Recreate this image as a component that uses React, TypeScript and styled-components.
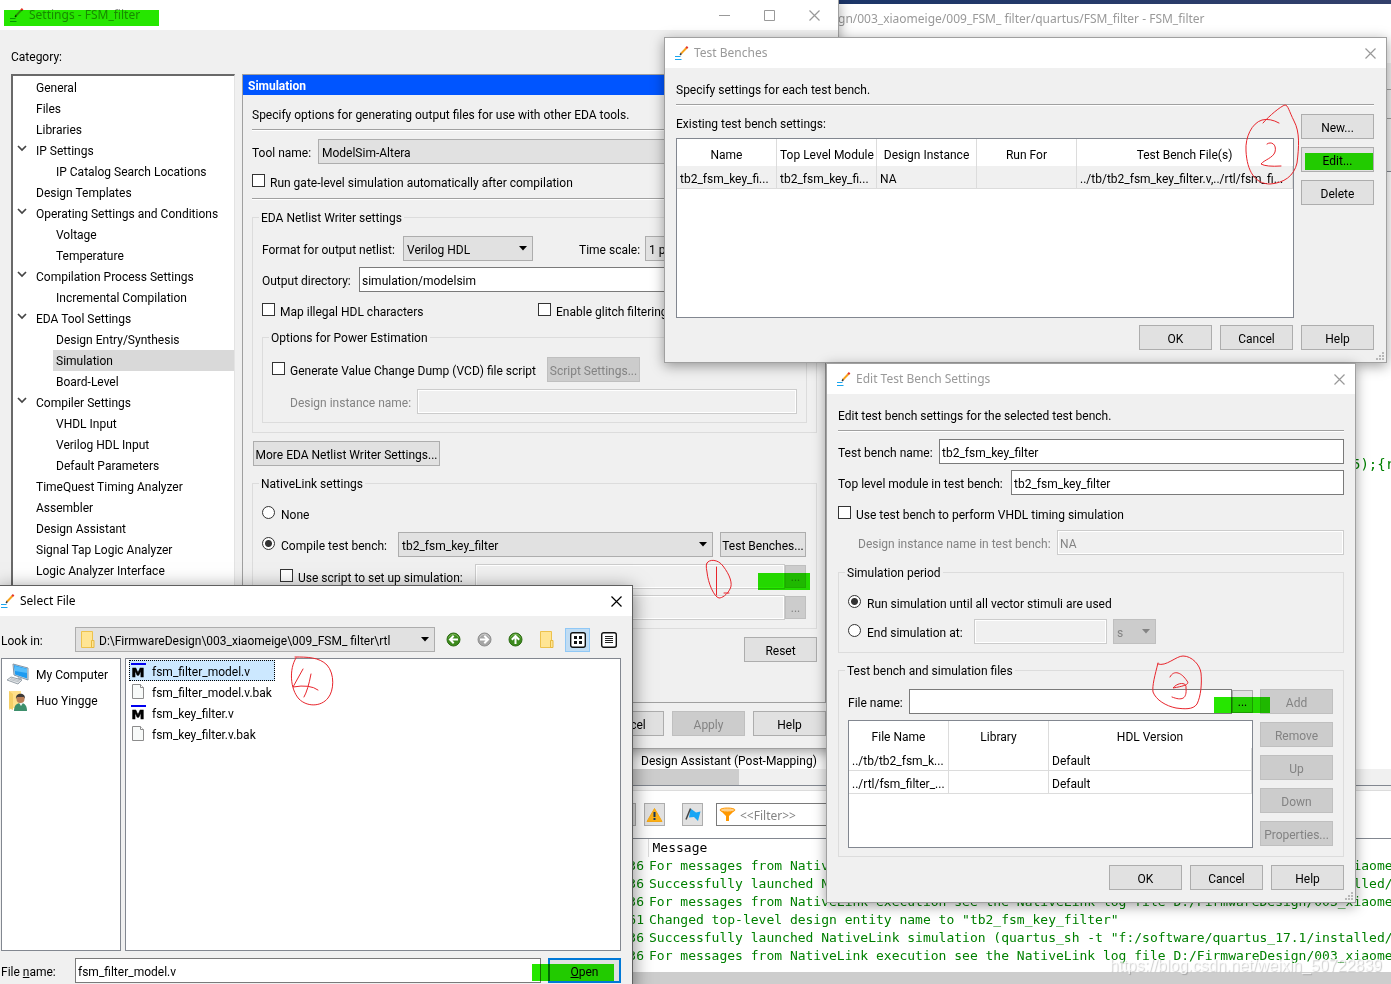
import React from "react";
import styled, { createGlobalStyle, css } from "styled-components";

const UI = `Roboto, "Noto Sans CJK SC", sans-serif`;
const CAPTION = `"Noto Sans", "Open Sans", sans-serif`;
const MONO = `"DejaVu Sans Mono", "Liberation Mono", monospace`;

const GlobalStyle = createGlobalStyle`
  * { box-sizing: border-box; }
  body { margin: 0; font: 12px/18px ${UI}; color: #000; background: #fff; }
  button, input, select { font: inherit; color: inherit; margin: 0; border-radius: 0; }
  fieldset, h1, h2, p, ul { margin: 0; padding: 0; }
  ul { list-style: none; }
`;

/* ---------- desktop and windows ---------- */

const Desktop = styled.main`
  position: relative;
  height: 100vh;
  overflow: hidden;
  background: linear-gradient(90deg, #24407a, #1b3568 60%, #33406b);
`;

const Frame = styled.section<{ $x: number; $y: number; $w: number; $active?: boolean }>`
  position: absolute;
  left: ${(p) => p.$x}px;
  top: ${(p) => p.$y}px;
  width: ${(p) => p.$w}px;
  background: #f0f0f0;
  border: 1px solid ${(p) => (p.$active ? "#5f5f5f" : "#a0a0a0")};
  box-shadow: 0 ${(p) => (p.$active ? "4px 18px rgba(0,0,0,.5)" : "3px 12px rgba(0,0,0,.38)")};
`;

const TitleBar = styled.header<{ $active?: boolean; $flush?: boolean }>`
  display: flex;
  align-items: center;
  gap: 5px;
  height: 30px;
  padding: 0 10px 0 ${(p) => (p.$flush ? 0 : 9)}px;
  background: #fff;
  color: ${(p) => (p.$active ? "#000" : "#999")};
`;

const Title = styled.h2`
  flex: 1;
  font: 400 12px/18px ${CAPTION};
  white-space: nowrap;
`;

const CaptionButton = styled.button`
  display: flex;
  padding: 0;
  border: 0;
  background: none;
`;

const Body = styled.div<{ $pad: string }>`
  display: flex;
  flex-direction: column;
  padding: ${(p) => p.$pad};
`;

/* ---------- shared controls ---------- */

const Row = styled.div<{ $mt?: number; $ml?: number; $end?: boolean; $gap?: number }>`
  display: flex;
  align-items: center;
  height: 25px;
  gap: ${(p) => p.$gap ?? 0}px;
  margin-top: ${(p) => p.$mt ?? 0}px;
  margin-left: ${(p) => p.$ml ?? 0}px;
  justify-content: ${(p) => (p.$end ? "flex-end" : "flex-start")};
`;

const Spaced = styled.div<{ $mt: number }>`
  display: flex;
  margin-top: ${(p) => p.$mt}px;
`;

const Text = styled.p`
  height: 18px;
  padding-top: 1px;
  white-space: nowrap;
`;

const Rule = styled.hr<{ $mt: number }>`
  width: 100%;
  height: 2px;
  margin: ${(p) => p.$mt}px 0 0;
  border: 0;
  border-top: 1px solid #a0a0a0;
  background: #fff;
`;

const Label = styled.label<{ $w?: number; $off?: boolean; $indent?: number }>`
  flex: none;
  width: ${(p) => (p.$w ? `${p.$w}px` : "auto")};
  padding: 2px 0 0 ${(p) => p.$indent ?? 0}px;
  white-space: nowrap;
  color: ${(p) => (p.$off ? "#838383" : "#000")};
`;

const Choice = styled.label<{ $w?: number }>`
  display: flex;
  flex: none;
  align-items: flex-start;
  gap: 5px;
  height: 18px;
  padding-top: 1px;
  width: ${(p) => (p.$w ? `${p.$w}px` : "auto")};
  white-space: nowrap;
`;

const tick = css`
  appearance: none;
  flex: none;
  width: 13px;
  height: 13px;
  border: 1px solid #333;
  background: #fff;
`;

const Check = styled.input.attrs({ type: "checkbox" })`
  ${tick}
`;

const Radio = styled.input.attrs({ type: "radio" })`
  ${tick}
  margin-right: 1px;
  border-radius: 50%;
  &:checked {
    background: radial-gradient(circle, #333 0 3px, #fff 4px);
  }
`;

const TextBox = styled.input.attrs({ type: "text" })<{ $w?: number }>`
  flex: ${(p) => (p.$w ? "none" : "1")};
  width: ${(p) => (p.$w ? `${p.$w}px` : "auto")};
  min-width: 0;
  height: 25px;
  padding: 3px 2px 0;
  border: 1px solid #7a7a7a;
  background: #fff;
  &:disabled {
    border-color: #ccc;
    background: #f0f0f0;
    box-shadow: inset 0 0 0 1px #fff;
    color: #838383;
  }
`;

const Button = styled.button<{ $w?: number; $default?: boolean; $ml?: number }>`
  flex: none;
  width: ${(p) => p.$w ?? 73}px;
  height: 25px;
  margin-left: ${(p) => p.$ml ?? 0}px;
  padding: 3px 0 0;
  border: ${(p) => (p.$default ? "2px solid #0078d7" : "1px solid #adadad")};
  background: #e1e1e1;
  white-space: nowrap;
  &:disabled {
    border-color: #bfbfbf;
    background: #ccc;
    color: #838383;
  }
`;

const Browse = styled(Button)`
  width: 21px;
  height: 23px;
  padding: 0;
`;

const SelectShell = styled.span<{ $w?: number; $off?: boolean }>`
  display: grid;
  flex: ${(p) => (p.$w ? "none" : "1")};
  width: ${(p) => (p.$w ? `${p.$w}px` : "auto")};
  height: 25px;
  align-items: center;
  border: 1px solid ${(p) => (p.$off ? "#bfbfbf" : "#adadad")};
  background: ${(p) => (p.$off ? "#ccc" : "#e1e1e1")};
  color: ${(p) => (p.$off ? "#838383" : "#000")};
  > * { grid-area: 1 / 1; }
  > svg { justify-self: end; margin-right: 5px; pointer-events: none; }
`;

const NativeSelect = styled.select<{ $pad: number }>`
  appearance: none;
  width: 100%;
  height: 23px;
  padding: 2px 16px 0 ${(p) => p.$pad}px;
  border: 0;
  background: none;
  opacity: 1;
`;

const Group = styled.fieldset<{ $mt: number; $pad: string }>`
  margin-top: ${(p) => p.$mt}px;
  padding: ${(p) => p.$pad};
  min-width: 0;
  border: 1px solid #dcdcdc;
`;

const Legend = styled.legend`
  height: 18px;
  margin-left: -3px;
  padding: 1px 2px 0;
`;

const Grip = styled.svg`
  position: absolute;
  right: 2px;
  bottom: 2px;
`;

type DropProps = { value: string; w?: number; off?: boolean; label: string; pad?: number; icon?: React.ReactNode };

function Drop({ value, w, off, label, pad = 3, icon }: DropProps) {
  return (
    <SelectShell $w={w} $off={off}>
      {icon}
      <NativeSelect aria-label={label} disabled={off} defaultValue={value} $pad={pad}>
        <option>{value}</option>
      </NativeSelect>
      <svg width="8" height="5" viewBox="0 0 8 5"><path d="M0 0h8L4 4.5z" fill={off ? "#838383" : "#000"} /></svg>
    </SelectShell>
  );
}

/* ---------- icons ---------- */

const PencilIcon = () => (
  <svg width="15" height="15" viewBox="0 0 15 15" fill="none">
    <path d="M1 10.500h5.500M1 13.500h6.500" stroke="#18a5ee" strokeWidth="1.200" />
    <path d="M6.200 9l1.300-2" stroke="#333" strokeWidth="1.600" />
    <path d="M7.300 7.400L12.400 2" stroke="#f7a11a" strokeWidth="2" />
    <path d="M12.200 2.200L13.600.8" stroke="#e5352b" strokeWidth="2.200" />
  </svg>
);

const CloseIcon = () => (
  <svg width="11" height="11" viewBox="0 0 11 11" stroke="currentColor" strokeWidth="1.200" fill="none"><path d="M.5.5l10 10M10.500.5l-10 10" /></svg>
);

const GripIcon = () => (
  <Grip width="8" height="8" viewBox="0 0 8 8" fill="#b8b8b8">
    <path d="M6 0h2v2H6zM6 3h2v2H6zM6 6h2v2H6zM3 3h2v2H3zM3 6h2v2H3zM0 6h2v2H0z" />
  </Grip>
);

const Chevron = () => (
  <svg width="10" height="7" viewBox="0 0 10 7" fill="none"><path d="M1 1l4 4 4-4" stroke="#444" strokeWidth="1.700" /></svg>
);

const FolderIcon = () => (
  <svg width="14" height="17" viewBox="0 0 14 17">
    <path d="M.5.5h11v16H.5z" fill="#ffe594" stroke="#edc24d" />
    <path d="M10.500 9.500h2.500v7h-2.500z" fill="#ffe594" stroke="#e7b93f" />
  </svg>
);

const ArrowIcon = ({ turn, off }: { turn: number; off?: boolean }) => (
  <svg width="15" height="15" viewBox="0 0 15 15" fill="none">
    <circle cx="7.500" cy="7.500" r="6.500" fill={off ? "#a5a5a5" : "#3c8a1c"} stroke={off ? "#8d8d8d" : "#2d6c14"} />
    <path d="M2.500 5.500a5.500 5.500 0 0 1 10 0" stroke={off ? "#ccc" : "#7fb95b"} />
    <g transform={`rotate(${turn} 7.5 7.5)`} stroke="#fff" strokeWidth="2"><path d="M12 7.500H4.500M7.700 3.800L4 7.500l3.700 3.700" /></g>
  </svg>
);

const GridIcon = () => (
  <svg width="16" height="16" viewBox="0 0 16 16">
    <rect x=".7" y=".7" width="14.600" height="14.600" rx="2" fill="#fff" stroke="#111" strokeWidth="1.400" />
    <path d="M4 4h3v3H4zM9 4h3v3H9zM4 9h3v3H4zM9 9h3v3H9z" fill="#111" />
  </svg>
);

const ListIcon = () => (
  <svg width="16" height="16" viewBox="0 0 16 16">
    <rect x=".7" y=".7" width="14.600" height="14.600" rx="2" fill="#fff" stroke="#111" strokeWidth="1.400" />
    <path d="M4 4.500h8M4 6.500h8M4 8.500h8M4 10.500h8" stroke="#222" />
  </svg>
);

const ComputerIcon = () => (
  <svg width="24" height="22" viewBox="0 0 24 22">
    <path d="M7 1l15 4v12L8 12z" fill="#d5dde4" stroke="#8296a6" />
    <path d="M8 2l13 3.500v10L9 11.500z" fill="#1e9bf0" />
    <path d="M9 3l12 3v4L9 8z" fill="#55bdfb" />
    <path d="M12 14l4 1.500-1 3-4-1z" fill="#aab6bf" />
    <path d="M1 17l4-3 11 3-4 4z" fill="#e4e7ea" stroke="#9aa3ab" />
    <path d="M4 16.500l9 2.500M5 15.500l9 2.500" stroke="#aab2b8" strokeWidth=".7" />
  </svg>
);

const UserIcon = () => (
  <svg width="20" height="21" viewBox="0 0 20 21">
    <path d="M1 1h12v17H4l-3 2z" fill="#ffe08a" />
    <path d="M1 1l4 3v16l-4-2z" fill="#f5cf66" />
    <path d="M6 21c0-6 3-8 7-8s6 3 6 8z" fill="#3d8f6c" />
    <path d="M11 13l2 3 2-3z" fill="#e9f1ee" />
    <circle cx="12.500" cy="9" r="4" fill="#b97d55" />
    <path d="M8 9c-1-7 10-7 9 0l-1-2H9z" fill="#3e3a38" />
  </svg>
);

const ModelIcon = () => (
  <svg width="15" height="16" viewBox="0 0 15 16">
    <path d="M0 0h15v2H0z" fill="#0000f0" />
    <text x="7" y="14" textAnchor="middle" fontFamily="DejaVu Sans" fontWeight="700" fontSize="13" stroke="#000" strokeWidth=".6">M</text>
  </svg>
);

const PageIcon = () => (
  <svg width="15" height="16" viewBox="0 0 15 16">
    <path d="M1.500.5h8l3 3v11h-11z" fill="#f8faf9" stroke="#8c8c8c" />
    <path d="M9.500.5v3h3" fill="#fff" stroke="#8c8c8c" />
  </svg>
);

/* ---------- main application window ---------- */

const Shell = styled.section`
  display: flex;
  flex-direction: column;
  height: 100%;
  padding-top: 4px;
`;

const AppTitle = styled.header`
  height: 59px;
  padding: 6px 0 0 838px;
  background: #fff;
  color: #999;
`;

const AppTools = styled.div`
  height: 109px;
  background: linear-gradient(#f0f0f0 0 26px, #a0a0a0 26px 27px, #f0f0f0 27px 55px, #a0a0a0 55px 56px, #f0f0f0 56px 108px, #828790 108px);
`;

const Editor = styled.div`
  flex: 1;
  padding: 283px 0 0 1352px;
  background: #fff;
  color: #008000;
  font: 14px/18px ${MONO};
  white-space: pre;
  overflow: hidden;
`;

const TaskRow = styled.div`
  padding: 3px 0 0 641px;
  height: 20px;
  background: #fff;
`;

const Scroll = styled.div`
  height: 22px;
  background: #f0f0f0;
  border-bottom: 1px solid #dcdcdc;
`;

const Track = styled.div`
  height: 17px;
  border-bottom: 1px solid #828790;
`;

const Thumb = styled.div`
  width: 739px;
  height: 16px;
  background: #cdcdcd;
`;

const MessageBar = styled.div`
  display: flex;
  align-items: center;
  height: 47px;
  padding-left: 615px;
  background: #fff;
`;

const Tool = styled.button<{ $ml?: number }>`
  display: grid;
  place-items: center;
  width: 21px;
  height: 23px;
  margin-left: ${(p) => p.$ml ?? 0}px;
  padding: 0;
  border: 1px solid #adadad;
  background: #e1e1e1;
`;

const FilterBox = styled.label`
  display: flex;
  align-items: center;
  gap: 4px;
  width: 300px;
  height: 23px;
  margin-left: 13px;
  padding-left: 2px;
  border: 1px solid #7a7a7a;
  > input { flex: 1; border: 0; padding: 2px 0 0; outline: 0; font: 12px/18px ${CAPTION}; background: none; }
  > input::placeholder { color: #838383; }
`;

const Log = styled.div`
  height: 134px;
  border-top: 1px solid #828790;
  background: #fff;
  overflow: hidden;
`;

const LogTable = styled.table`
  width: 100%;
  table-layout: fixed;
  border-collapse: collapse;
  font: 13px/18px ${MONO};
  color: #008000;
  white-space: pre;
  th, td { padding: 0 0 0 1px; height: 18px; text-align: left; font-weight: 400; }
  th { padding-left: 4px; color: #000; }
  th:first-child { border-right: 1px solid #dcdcdc; }
  td:first-child { text-align: right; padding-right: 4px; }
  col:first-child { width: 648px; }
`;

const StatusBar = styled.footer`
  height: 12px;
  background: #cdcdcd;
`;

const logNote = "For messages from NativeLink execution see the NativeLink log file D:/FirmwareDesign/003_xiaomeige/009_FSM_ filter";
const launched = 'Successfully launched NativeLink simulation (quartus_sh -t "f:/software/quartus_17.1/installed/quartus';
const messages: [string, string][] = [
  ["36", logNote],
  ["36", launched],
  ["36", logNote],
  ["61", 'Changed top-level design entity name to "tb2_fsm_key_filter"'],
  ["36", launched],
  ["36", logNote],
];

function MainWindow() {
  return (
    <Shell>
      <AppTitle><Title>gn/003_xiaomeige/009_FSM_ filter/quartus/FSM_filter - FSM_filter</Title></AppTitle>
      <AppTools />
      <Editor>{"5);{r"}</Editor>
      <TaskRow>Design Assistant (Post-Mapping)</TaskRow>
      <Scroll><Track><Thumb /></Track></Scroll>
      <MessageBar>
        <Tool aria-label="Info messages" />
        <Tool aria-label="Warnings" $ml={8}>
          <svg width="17" height="16" viewBox="0 0 17 16"><path d="M8.500 1.500L16 14.500H1z" fill="#fbb117" stroke="#f5a716" strokeLinejoin="round" /><path d="M7.500 5h2v5h-2zM7.500 11h2v2h-2z" fill="#14365c" /></svg>
        </Tool>
        <Tool aria-label="Flagged messages" $ml={17}>
          <svg width="16" height="16" viewBox="0 0 16 16"><path d="M5.500 1.500l5.500 4 4.500-1-2.500 9.500-4-4-5 .5z" fill="#19a6f5" /><path d="M5.500 1.500L1 12.500" stroke="#444" strokeWidth="1.500" /></svg>
        </Tool>
        <FilterBox>
          <svg width="17" height="15" viewBox="0 0 17 15"><path d="M1 3h15l-6 6v5H7V9z" fill="#ff9800" /><ellipse cx="8.500" cy="3" rx="7.500" ry="2" fill="#ffd08a" stroke="#ff9800" /></svg>
          <input aria-label="Filter" placeholder="<<Filter>>" />
        </FilterBox>
      </MessageBar>
      <Log>
        <LogTable>
          <colgroup><col /><col /></colgroup>
          <thead><tr><th /><th>Message</th></tr></thead>
          <tbody>{messages.map(([id, text], i) => <tr key={i}><td>{id}</td><td>{text}</td></tr>)}</tbody>
        </LogTable>
      </Log>
      <StatusBar />
    </Shell>
  );
}

/* ---------- settings window ---------- */

const Columns = styled.div`
  display: grid;
  grid-template-columns: 224px 1fr;
  gap: 7px;
  height: 629px;
  margin-top: 9px;
`;

const Tree = styled.ul`
  padding-top: 1px;
  border: 2px solid #696969;
  border-color: #696969 #e3e3e3 #e3e3e3 #696969;
  border-right-width: 1px;
  background: #fff;
  overflow: hidden;
`;

const TreeItem = styled.li<{ $sub?: boolean; $on?: boolean }>`
  display: flex;
  height: 21px;
  > span:first-child { width: ${(p) => (p.$sub ? 40 : 20)}px; padding-left: 4px; line-height: 16px; flex: none; }
  > span:last-child {
    flex: 1;
    padding: 2px 0 0 3px;
    white-space: nowrap;
    background: ${(p) => (p.$on ? "#d9d9d9" : "none")};
  }
`;

const Panel = styled.div`
  display: flex;
  flex-direction: column;
  border: 1px solid #a0a0a0;
`;

const PanelHeader = styled.h1`
  height: 20px;
  padding: 2px 5px 0;
  background: #0055ff;
  color: #fff;
  font: 700 12px/18px ${UI};
`;

const PanelBody = styled.div`
  display: flex;
  flex-direction: column;
  padding: 10px 8px 0 9px;
`;

const tree: [string, "open" | "top" | "sub"][] = [
  ["General", "top"], ["Files", "top"], ["Libraries", "top"], ["IP Settings", "open"],
  ["IP Catalog Search Locations", "sub"], ["Design Templates", "top"],
  ["Operating Settings and Conditions", "open"], ["Voltage", "sub"], ["Temperature", "sub"],
  ["Compilation Process Settings", "open"], ["Incremental Compilation", "sub"],
  ["EDA Tool Settings", "open"], ["Design Entry/Synthesis", "sub"], ["Simulation", "sub"],
  ["Board-Level", "sub"], ["Compiler Settings", "open"], ["VHDL Input", "sub"],
  ["Verilog HDL Input", "sub"], ["Default Parameters", "sub"], ["TimeQuest Timing Analyzer", "top"],
  ["Assembler", "top"], ["Design Assistant", "top"], ["Signal Tap Logic Analyzer", "top"],
  ["Logic Analyzer Interface", "top"],
];

const SettingsCaptions = styled.div`
  display: flex;
  align-items: center;
  gap: 34px;
  padding-right: 8px;
`;

function SimulationPage() {
  return (
    <Panel>
      <PanelHeader>Simulation</PanelHeader>
      <PanelBody>
        <Text>Specify options for generating output files for use with other EDA tools.</Text>
        <Rule $mt={6} />
        <Row $mt={8}><Label $w={66}>Tool name:</Label><Drop label="Tool name" value="ModelSim-Altera" /></Row>
        <Spaced $mt={9}><Choice><Check />Run gate-level simulation automatically after compilation</Choice></Spaced>
        <Rule $mt={7} />
        <Group $mt={8} $pad="10px 9px 9px">
          <Legend>EDA Netlist Writer settings</Legend>
          <Row>
            <Label $w={141}>Format for output netlist:</Label>
            <Drop label="Format for output netlist" value="Verilog HDL" w={130} />
            <Label $w={112} $indent={46}>Time scale:</Label>
            <Drop label="Time scale" value="1 ps" />
          </Row>
          <Row $mt={6}><Label $w={97} htmlFor="outdir">Output directory:</Label><TextBox id="outdir" defaultValue="simulation/modelsim" /></Row>
          <Spaced $mt={10}>
            <Choice $w={276}><Check />Map illegal HDL characters</Choice>
            <Choice><Check />Enable glitch filtering</Choice>
          </Spaced>
          <Group $mt={8} $pad="11px 9px 8px">
            <Legend>Options for Power Estimation</Legend>
            <Row>
              <Choice $w={275}><Check />Generate Value Change Dump (VCD) file script</Choice>
              <Button $w={93} disabled>Script Settings...</Button>
            </Row>
            <Row $mt={7} $ml={18}><Label $w={127} $off htmlFor="inst">Design instance name:</Label><TextBox id="inst" disabled /></Row>
          </Group>
        </Group>
        <Row $mt={8} $ml={1}><Button $w={187}>More EDA Netlist Writer Settings...</Button></Row>
        <Group $mt={8} $pad="13px 10px 8px 9px">
          <Legend>NativeLink settings</Legend>
          <Spaced $mt={0}><Choice><Radio name="native" />None</Choice></Spaced>
          <Row $mt={9}>
            <Choice $w={136}><Radio name="native" defaultChecked />Compile test bench:</Choice>
            <Drop label="Test bench" value="tb2_fsm_key_filter" />
            <Button $w={86} $ml={7}>Test Benches...</Button>
          </Row>
          <Row $mt={7} $ml={18}>
            <Choice $w={195}><Check />Use script to set up simulation:</Choice>
            <TextBox aria-label="Setup script" disabled />
            <Browse disabled aria-label="Browse setup script">...</Browse>
          </Row>
          <Row $mt={6} $ml={213}>
            <TextBox aria-label="Compare script" disabled />
            <Browse disabled aria-label="Browse compare script">...</Browse>
          </Row>
        </Group>
        <Row $mt={8} $end><Button>Reset</Button></Row>
      </PanelBody>
    </Panel>
  );
}

function SettingsWindow() {
  return (
    <Frame $x={-1} $y={-1} $w={840}>
      <TitleBar>
        <PencilIcon />
        <Title>Settings - FSM_filter</Title>
        <SettingsCaptions>
          <CaptionButton aria-label="Minimize"><svg width="11" height="11" viewBox="0 0 11 11" stroke="currentColor"><path d="M0 5.500h11" /></svg></CaptionButton>
          <CaptionButton aria-label="Maximize"><svg width="11" height="11" viewBox="0 0 11 11" stroke="currentColor" fill="none"><path d="M.5.5h10v10H.5z" /></svg></CaptionButton>
          <CaptionButton aria-label="Close"><CloseIcon /></CaptionButton>
        </SettingsCaptions>
      </TitleBar>
      <Body $pad="17px 12px 12px 11px">
        <Text>Category:</Text>
        <Columns>
          <Tree>
            {tree.map(([name, kind]) => (
              <TreeItem key={name} $sub={kind === "sub"} $on={name === "Simulation"}>
                <span>{kind === "open" && <Chevron />}</span>
                <span>{name}</span>
              </TreeItem>
            ))}
          </Tree>
          <SimulationPage />
        </Columns>
        <Row $mt={8} $end $gap={8}>
          <Button>OK</Button>
          <Button>Cancel</Button>
          <Button disabled>Apply</Button>
          <Button>Help</Button>
        </Row>
      </Body>
    </Frame>
  );
}

/* ---------- data grids ---------- */

const GridShell = styled.div<{ $h: number }>`
  height: ${(p) => p.$h}px;
  margin-top: 6px;
  border: 1px solid #828790;
  background: #fff;
`;

const DataTable = styled.table<{ $shade?: boolean }>`
  width: 100%;
  table-layout: fixed;
  border-collapse: separate;
  border-spacing: 0;
  th, td {
    padding: 4px 3px 0;
    overflow: hidden;
    white-space: nowrap;
    border-right: 1px solid #dcdcdc;
    font-weight: 400;
  }
  th { height: 27px; }
  th:last-child { border-right-color: #fff; }
  td { height: 23px; text-align: left; border-bottom: 1px solid #dcdcdc; background: ${(p) => (p.$shade ? "#f0f0f0" : "#fff")}; }
  col { width: 100px; }
  col:last-child { width: auto; }
`;

function Grid({ heads, rows, shade }: { heads: string[]; rows: string[][]; shade?: boolean }) {
  return (
    <DataTable $shade={shade}>
      <colgroup>{heads.map((h) => <col key={h} />)}</colgroup>
      <thead><tr>{heads.map((h) => <th key={h}>{h}</th>)}</tr></thead>
      <tbody>{rows.map((r, i) => <tr key={i}>{r.map((c, j) => <td key={j}>{c}</td>)}</tr>)}</tbody>
    </DataTable>
  );
}

const ButtonStack = styled.div`
  display: flex;
  flex-direction: column;
  gap: 8px;
`;

const Split = styled.div<{ $mt: number }>`
  display: flex;
  align-items: flex-start;
  gap: 7px;
  margin-top: ${(p) => p.$mt}px;
`;

const Fill = styled.div`
  flex: 1;
  min-width: 0;
`;

/* ---------- test benches window ---------- */

function TestBenchesWindow() {
  return (
    <Frame $x={664} $y={37} $w={723}>
      <TitleBar><PencilIcon /><Title>Test Benches</Title><CaptionButton aria-label="Close"><CloseIcon /></CaptionButton></TitleBar>
      <Body $pad="12px 12px 12px 11px">
        <Text>Specify settings for each test bench.</Text>
        <Rule $mt={6} />
        <Split $mt={8}>
          <Fill>
            <Text>Existing test bench settings:</Text>
            <GridShell $h={180}>
              <Grid
                shade
                heads={["Name", "Top Level Module", "Design Instance", "Run For", "Test Bench File(s)"]}
                rows={[["tb2_fsm_key_fi...", "tb2_fsm_key_fi...", "NA", "", "../tb/tb2_fsm_key_filter.v,../rtl/fsm_fi..."]]}
              />
            </GridShell>
          </Fill>
          <ButtonStack><Button>New...</Button><Button>Edit...</Button><Button>Delete</Button></ButtonStack>
        </Split>
        <Row $mt={7} $end $gap={8}><Button>OK</Button><Button>Cancel</Button><Button>Help</Button></Row>
      </Body>
      <GripIcon />
    </Frame>
  );
}

/* ---------- edit test bench window ---------- */

function EditWindow() {
  return (
    <Frame $x={826} $y={363} $w={530}>
      <TitleBar><PencilIcon /><Title>Edit Test Bench Settings</Title><CaptionButton aria-label="Close"><CloseIcon /></CaptionButton></TitleBar>
      <Body $pad="12px 11px 12px 11px">
        <Text>Edit test bench settings for the selected test bench.</Text>
        <Rule $mt={6} />
        <Row $mt={7}><Label $w={101} htmlFor="tbname">Test bench name:</Label><TextBox id="tbname" defaultValue="tb2_fsm_key_filter" /></Row>
        <Row $mt={6}><Label $w={173} htmlFor="tbtop">Top level module in test bench:</Label><TextBox id="tbtop" defaultValue="tb2_fsm_key_filter" /></Row>
        <Spaced $mt={10}><Choice><Check />Use test bench to perform VHDL timing simulation</Choice></Spaced>
        <Row $mt={7} $ml={20}><Label $w={199} $off htmlFor="tbinst">Design instance name in test bench:</Label><TextBox id="tbinst" disabled defaultValue="NA" /></Row>
        <Group $mt={8} $pad="13px 9px 8px">
          <Legend>Simulation period</Legend>
          <Spaced $mt={0}><Choice><Radio name="period" defaultChecked />Run simulation until all vector stimuli are used</Choice></Spaced>
          <Row $mt={7} $gap={6}>
            <Choice $w={120}><Radio name="period" />End simulation at:</Choice>
            <TextBox aria-label="End time" disabled $w={133} />
            <Drop label="Time unit" value="s" off w={43} />
          </Row>
        </Group>
        <Group $mt={8} $pad="10px 10px 8px 9px">
          <Legend>Test bench and simulation files</Legend>
          <Split $mt={0}>
            <Fill>
              <Row><Label $w={61} htmlFor="tbfile">File name:</Label><TextBox id="tbfile" /><Browse aria-label="Browse file">...</Browse></Row>
              <GridShell $h={128}>
                <Grid
                  heads={["File Name", "Library", "HDL Version"]}
                  rows={[["../tb/tb2_fsm_k...", "", "Default"], ["../rtl/fsm_filter_...", "", "Default"]]}
                />
              </GridShell>
            </Fill>
            <ButtonStack>
              <Button disabled>Add</Button><Button disabled>Remove</Button><Button disabled>Up</Button>
              <Button disabled>Down</Button><Button disabled>Properties...</Button>
            </ButtonStack>
          </Split>
        </Group>
        <Row $mt={8} $end $gap={8}><Button>OK</Button><Button>Cancel</Button><Button>Help</Button></Row>
      </Body>
      <GripIcon />
    </Frame>
  );
}

/* ---------- select file window ---------- */

const Places = styled.ul`
  width: 120px;
  border: 1px solid #828790;
  background: #fff;
  padding: 2px 0 0 4px;
`;

const Place = styled.li`
  display: flex;
  align-items: center;
  gap: 6px;
  height: 26px;
  > svg { width: 24px; }
  > span { padding-top: 2px; }
`;

const Files = styled.ul`
  flex: 1;
  border: 1px solid #828790;
  background: #fff;
  padding: 1px 3px;
`;

const FileRow = styled.li<{ $on?: boolean }>`
  display: flex;
  align-items: center;
  gap: 6px;
  width: max-content;
  height: 21px;
  padding: 0 24px 0 1px;
  border: 1px dotted ${(p) => (p.$on ? "#000" : "transparent")};
  background: ${(p) => (p.$on ? "#cce8ff" : "none")};
  > span { padding-top: 3px; }
`;

const FileLists = styled.div`
  display: flex;
  gap: 4px;
  height: 293px;
  margin-top: 6px;
`;

const IconButton = styled.button<{ $on?: boolean }>`
  display: grid;
  place-items: center;
  width: 25px;
  height: 24px;
  padding: 0;
  border: 1px solid ${(p) => (p.$on ? "#90c8f6" : "transparent")};
  background: ${(p) => (p.$on ? "#c0dcf3" : "none")};
`;

const FolderSlot = styled.span`
  display: flex;
  padding-left: 5px;
`;

function SelectFileWindow() {
  return (
    <Frame $x={-1} $y={585} $w={634} $active>
      <TitleBar $active $flush><PencilIcon /><Title>Select File</Title><CaptionButton aria-label="Close"><CloseIcon /></CaptionButton></TitleBar>
      <Body $pad="11px 11px 8px 1px">
        <Row $gap={6}>
          <Label $w={68}>Look in:</Label>
          <Drop label="Look in" w={360} pad={23} value="D:\FirmwareDesign\003_xiaomeige\009_FSM_ filter\rtl" icon={<FolderSlot><FolderIcon /></FolderSlot>} />
          <IconButton aria-label="Back"><ArrowIcon turn={0} /></IconButton>
          <IconButton aria-label="Forward"><ArrowIcon turn={180} off /></IconButton>
          <IconButton aria-label="Up"><ArrowIcon turn={90} /></IconButton>
          <IconButton aria-label="New folder"><FolderIcon /></IconButton>
          <IconButton aria-label="Icons" $on><GridIcon /></IconButton>
          <IconButton aria-label="Details"><ListIcon /></IconButton>
        </Row>
        <FileLists>
          <Places>
            <Place><ComputerIcon /><span>My Computer</span></Place>
            <Place><UserIcon /><span>Huo Yingge</span></Place>
          </Places>
          <Files>
            <FileRow $on><ModelIcon /><span>fsm_filter_model.v</span></FileRow>
            <FileRow><PageIcon /><span>fsm_filter_model.v.bak</span></FileRow>
            <FileRow><ModelIcon /><span>fsm_key_filter.v</span></FileRow>
            <FileRow><PageIcon /><span>fsm_key_filter.v.bak</span></FileRow>
          </Files>
        </FileLists>
        <Row $mt={7} $gap={7}>
          <Label $w={67} htmlFor="fname">File <u>n</u>ame:</Label>
          <TextBox id="fname" defaultValue="fsm_filter_model.v" />
          <Button $default><u>O</u>pen</Button>
        </Row>
      </Body>
    </Frame>
  );
}

/* ---------- annotations over the windows ---------- */

const Marker = styled.span<{ $x: number; $y: number; $w: number; $h: number }>`
  position: absolute;
  left: ${(p) => p.$x}px;
  top: ${(p) => p.$y}px;
  width: ${(p) => p.$w}px;
  height: ${(p) => p.$h}px;
  background: #26e600;
  mix-blend-mode: multiply;
  pointer-events: none;
`;

const Ink = styled.svg<{ $x: number; $y: number }>`
  position: absolute;
  left: ${(p) => p.$x}px;
  top: ${(p) => p.$y}px;
  pointer-events: none;
  fill: none;
  stroke: #e8252c;
  stroke-linecap: round;
  stroke-linejoin: round;
`;

const Watermark = styled.p`
  position: absolute;
  right: 9px;
  bottom: 8px;
  font: 16px/20px "Liberation Sans", sans-serif;
  color: rgba(255, 255, 255, 0.75);
  text-shadow: 1px 1px 1px rgba(0, 0, 0, 0.2);
`;

export default function App() {
  return (
    <Desktop>
      <GlobalStyle />
      <MainWindow />
      <SettingsWindow />
      <TestBenchesWindow />
      <EditWindow />
      <SelectFileWindow />
      <Marker $x={4} $y={10} $w={155} $h={16} />
      <Marker $x={758} $y={573} $w={52} $h={17} />
      <Marker $x={1305} $y={153} $w={68} $h={17} />
      <Marker $x={1214} $y={697} $w={56} $h={16} />
      <Marker $x={532} $y={964} $w={82} $h={17} />
      <Ink $x={704} $y={558} width="32" height="42" viewBox="704 558 32 42">
        <path d="M707 563C709 559 718 559 723 566C730 575 733 584 730 589C727 595 722 598 719 598C714 597 708 583 707 572C706 567 706 564 707 563M716.500 567V595M724 593L729 593" />
      </Ink>
      <Ink $x={1242} $y={102} width="60" height="86" viewBox="1242 102 60 86">
        <path d="M1263 123C1269 116 1281 106 1285 105C1288 105 1289 111 1294 121C1300 132 1299 147 1297 163C1294 176 1284 183 1270 184C1255 184 1247 171 1246 151C1245 137 1252 123 1262 120Q1270 118 1279 123M1267 144C1271 141 1277 144 1275 152C1273 158 1264 160 1261 164Q1266 167 1281 166" />
      </Ink>
      <Ink $x={1150} $y={653} width="54" height="60" viewBox="1150 653 54 60">
        <path d="M1158 664C1166 667 1176 656 1183 656C1192 656 1200 665 1201 673C1202 683 1201 696 1197 704C1193 710 1184 709 1176 708C1166 706 1156 700 1153 692C1152 686 1155 675 1158 663M1170 677C1174 669 1182 673 1187 681C1190 684 1185 686 1173 688C1178 682 1187 682 1186 688C1187 699 1182 701 1172 697" />
      </Ink>
      <Ink $x={288} $y={653} width="48" height="56" viewBox="288 653 48 56">
        <path d="M295 657C307 657 319 657 327 665C335 674 334 691 328 698C321 707 307 707 299 699C290 689 289 669 296 658M303 669L293 687Q310 684 318 690M311 674Q308 690 304 697" />
      </Ink>
      <Watermark>https://blog.csdn.net/weixin_50722839</Watermark>
    </Desktop>
  );
}
